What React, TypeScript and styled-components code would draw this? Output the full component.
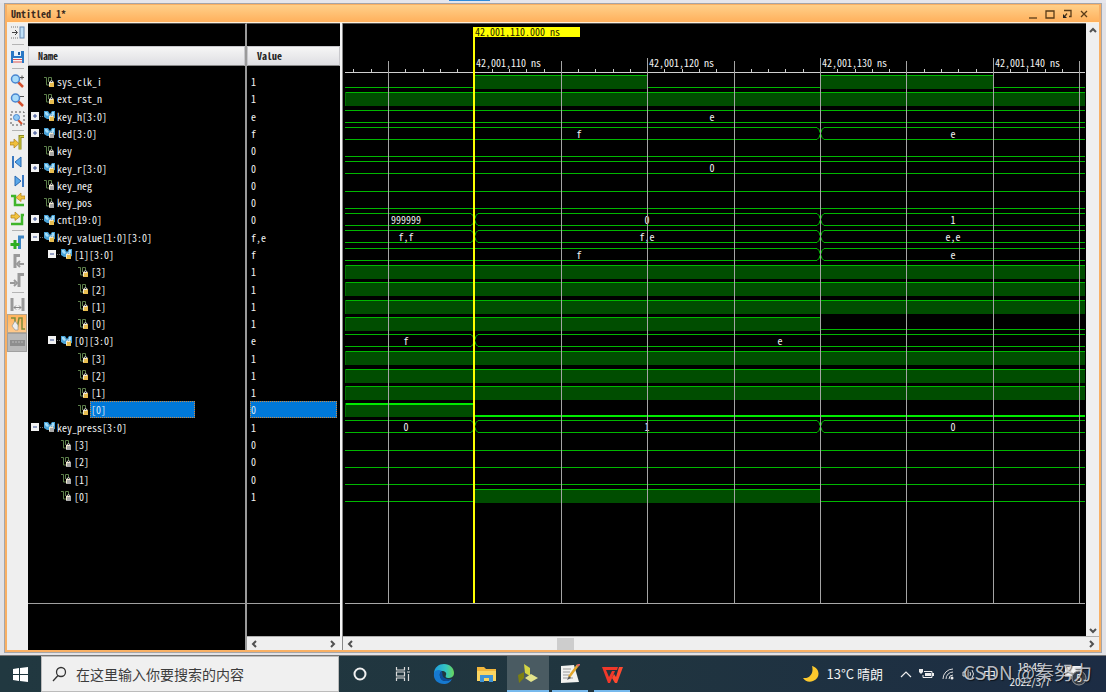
import React from "react";
import styled, { createGlobalStyle, css } from "styled-components";

const MONO = `"Noto Sans Mono CJK SC", "Liberation Mono", monospace`;
const UI = `"Noto Sans CJK SC", "Noto Sans", sans-serif`;

const Global = createGlobalStyle`
  * { box-sizing: border-box; }
  body { margin: 0; background: #e6e6ea; overflow: hidden; }
  button { padding: 0; border: 0; background: none; color: inherit; font: inherit; }
`;

const Screen = styled.div`
  display: flex;
  flex-direction: column;
  height: 100vh;
  font: 10px/14px ${MONO};
  color: #f2f2f2;
`;

const TopStrip = styled.div`
  height: 3px;
  padding-left: 449px;
  background: #e6e6ec;
`;
const TopAccent = styled.div`
  width: 41px;
  height: 1px;
  background: #2f8ad8;
`;

const Desk = styled.main`
  flex: 1;
  min-height: 0;
  display: flex;
  padding: 0 4px 2px 4px;
  background: #e2e2e6;
  border-bottom: 1px solid #777;
`;
const Window = styled.section`
  flex: 1;
  min-width: 0;
  display: flex;
  flex-direction: column;
  border: 1px solid #a5a5a8;
`;
const Frame = styled.div`
  flex: 1;
  min-height: 0;
  display: flex;
  flex-direction: column;
  border: 2px solid #f9b064;
  border-top-width: 1px;
`;
const TitleBar = styled.header`
  display: flex;
  align-items: center;
  height: 18px;
  padding: 0 7px 0 4px;
  background: linear-gradient(#ffd08a, #ffb05c);
  border-bottom: 1px solid #fff0d8;
  color: #3a2a20;
`;
const Title = styled.h1`
  flex: 1;
  margin: 0;
  font: bold 10px/14px ${MONO};
`;
const WinButton = styled.button`
  display: grid;
  place-items: center;
  width: 17px;
  height: 14px;
`;

const Body = styled.div`
  flex: 1;
  min-height: 0;
  display: flex;
  background: #000;
`;
const Toolbar = styled.nav`
  width: 21px;
  padding-right: 1px;
  background: #efefef;
`;
const ToolButton = styled.button<{ $state?: "on" | "off" }>`
  display: grid;
  place-items: center;
  width: 20px;
  height: 19px;
  ${(p) => p.$state === "on" && css`background: linear-gradient(#ffb35c, #ffc98c); border: 1px solid #b5a58e;`}
  ${(p) => p.$state === "off" && css`background: #b9b9b9; border: 1px solid #a0a0a0;`}
`;
const ToolRule = styled.hr`
  height: 1px;
  margin: 2px 3px 2px 5px;
  border: 0;
  background: #b4b4b4;
`;

const Column = styled.div<{ $w: number; $ruled?: boolean }>`
  flex: none;
  display: flex;
  flex-direction: column;
  width: ${(p) => p.$w}px;
  padding-top: 22px;
  border-top: 1px solid #555;
  border-right: ${(p) => (p.$ruled ? "2px solid #9a9a9a" : "0")};
`;
const Head = styled.div`
  height: 20px;
  padding: 2px 9px;
  background: linear-gradient(#f6f6f6, #dedee2);
  border: 1px solid #c8c8cc;
  border-bottom-color: #888;
  color: #222;
  font-weight: bold;
`;
const Rows = styled.ul<{ $top: number }>`
  display: flex;
  flex-direction: column;
  height: 432px;
  margin: ${(p) => p.$top}px 0 0;
  padding: 0;
  list-style: none;
`;
const NameRow = styled.li<{ $depth: number }>`
  flex: 1;
  display: flex;
  align-items: center;
  padding-left: ${(p) => 3 + p.$depth * 17}px;
`;
const Fold = styled.span`
  display: flex;
  width: 13px;
`;
const FoldButton = styled.button`
  display: flex;
`;
const Name = styled.span<{ $selected?: boolean }>`
  margin-left: 1px;
  height: 17px;
  padding: 1px 0;
  border: 1px solid transparent;
  ${(p) => p.$selected && css`width: 105px; background: #0078d8; border: 1px dotted #d08840; color: #d8e8f8;`}
`;
const ValueRow = styled.li`
  flex: 1;
  display: flex;
  align-items: center;
  padding: 0 3px;
`;
const Value = styled.span<{ $selected?: boolean }>`
  width: 100%;
  height: 17px;
  padding: 1px 0;
  border: 1px solid transparent;
  ${(p) => p.$selected && css`background: #0078d8; border: 1px dotted #d08840; color: #d8e8f8;`}
`;
const Foot = styled.div`
  display: flex;
  flex-direction: column;
  justify-content: flex-end;
  height: 47px;
  margin-top: auto;
  border-top: 1px solid #a0a0a0;
`;
const HBar = styled.div`
  display: flex;
  align-items: center;
  height: 14px;
  padding: 0 3px;
  background: #efefef;
  border-top: 1px solid #b0b0b0;
`;
const HTrack = styled.div`
  flex: 1;
  height: 12px;
  padding-left: 27%;
`;
const HThumb = styled.div`
  width: 17px;
  height: 12px;
  background: #cdcdcd;
`;
const ArrowButton = styled.button`
  display: flex;
`;
const Splitter = styled.div`
  width: 3px;
  background: #f4f4f4;
  border-right: 1px solid #888;
`;
const Wave = styled.div`
  flex: 1;
  min-width: 0;
  display: flex;
  flex-direction: column;
`;
const WaveTop = styled.div`
  flex: 1;
  min-height: 0;
  display: flex;
`;
const Plot = styled.svg`
  flex: 1;
  min-width: 0;
  height: 100%;
  border-top: 1px solid #555;
`;
const VBar = styled.div`
  display: flex;
  flex-direction: column;
  align-items: center;
  justify-content: space-between;
  width: 13px;
  padding: 3px 0 1px;
  background: #efefef;
`;

const Taskbar = styled.footer`
  position: relative;
  flex: none;
  display: flex;
  height: 36px;
  background: linear-gradient(90deg, #213840, #20353f 55%, #1c2c44);
  color: #f0f0f0;
  font: 13px/18px ${UI};
`;
const StartButton = styled.button`
  display: grid;
  place-items: center;
  width: 41px;
`;
const Search = styled.label`
  display: flex;
  align-items: center;
  gap: 9px;
  width: 298px;
  padding: 0 10px;
  background: #f0f0f0;
  border: 1px solid #bbb;
`;
const SearchInput = styled.input`
  flex: 1;
  min-width: 0;
  padding: 0;
  border: 0;
  outline: 0;
  background: none;
  font: 14px/20px ${UI};
  &::placeholder { color: #3c3c3c; opacity: 1; }
`;
const TaskButton = styled.button<{ $active?: boolean; $open?: boolean }>`
  display: grid;
  place-items: center;
  width: 42px;
  padding: 0 4px;
  ${(p) => p.$active && css`background: #4a5b62;`}
  ${(p) => (p.$active || p.$open) && css`box-shadow: inset 0 -2px #76b9ed;`}
`;
const OpenTask = styled(TaskButton)`
  width: 36px;
  margin: 0 3px;
`;
const Tray = styled.div`
  display: flex;
  align-items: center;
  margin-left: auto;
  padding-right: 18px;
`;
const Weather = styled.button`
  display: flex;
  align-items: center;
  gap: 8px;
  margin-right: 12px;
`;
const TrayIcon = styled.button`
  display: grid;
  place-items: center;
  width: 21px;
  height: 24px;
`;
const Clock = styled.time`
  width: 60px;
  font: 10px/15px ${UI};
  text-align: center;
`;
const Notice = styled.button`
  position: relative;
  width: 26px;
  height: 24px;
  margin-left: 2px;
`;
const Watermark = styled.span`
  position: absolute;
  right: 14px;
  top: 2px;
  color: rgba(214, 216, 222, 0.85);
  font: 400 19px/28px ${UI};
  text-shadow: 1px 1px 1px rgba(0, 0, 0, 0.6);
`;

/* ---- signals ---- */
type Seg = { to: number; v: string };
type Signal = {
  name: string;
  value: string;
  depth: number;
  bus?: "plus" | "minus";
  lock?: boolean;
  selected?: boolean;
  wave: Seg[];
};

const END = 99;
const hi: Seg[] = [{ to: END, v: "H" }];
const lo: Seg[] = [{ to: END, v: "L" }];
const at = (a: string, b: string, c: string): Seg[] => [{ to: 0, v: a }, { to: 20, v: b }, { to: END, v: c }];

const signals: Signal[] = [
  { name: "sys_clk_i", value: "1", depth: 0, lock: true, wave: [{ to: 0, v: "L" }, { to: 10, v: "H" }, { to: 20, v: "L" }, { to: 30, v: "H" }, { to: END, v: "L" }] },
  { name: "ext_rst_n", value: "1", depth: 0, lock: true, wave: hi },
  { name: "key_h[3:0]", value: "e", depth: 0, bus: "plus", lock: true, wave: [{ to: END, v: "e" }] },
  { name: "led[3:0]", value: "f", depth: 0, bus: "plus", wave: [{ to: 20, v: "f" }, { to: END, v: "e" }] },
  { name: "key", value: "0", depth: 0, wave: lo },
  { name: "key_r[3:0]", value: "0", depth: 0, bus: "plus", lock: true, wave: [{ to: END, v: "0" }] },
  { name: "key_neg", value: "0", depth: 0, wave: lo },
  { name: "key_pos", value: "0", depth: 0, wave: lo },
  { name: "cnt[19:0]", value: "0", depth: 0, bus: "plus", lock: true, wave: at("999999", "0", "1") },
  { name: "key_value[1:0][3:0]", value: "f,e", depth: 0, bus: "minus", lock: true, wave: at("f,f", "f,e", "e,e") },
  { name: "[1][3:0]", value: "f", depth: 1, bus: "minus", lock: true, wave: [{ to: 20, v: "f" }, { to: END, v: "e" }] },
  { name: "[3]", value: "1", depth: 2, lock: true, wave: hi },
  { name: "[2]", value: "1", depth: 2, lock: true, wave: hi },
  { name: "[1]", value: "1", depth: 2, lock: true, wave: hi },
  { name: "[0]", value: "1", depth: 2, lock: true, wave: [{ to: 20, v: "H" }, { to: END, v: "L" }] },
  { name: "[0][3:0]", value: "e", depth: 1, bus: "minus", lock: true, wave: [{ to: 0, v: "f" }, { to: END, v: "e" }] },
  { name: "[3]", value: "1", depth: 2, lock: true, wave: hi },
  { name: "[2]", value: "1", depth: 2, lock: true, wave: hi },
  { name: "[1]", value: "1", depth: 2, lock: true, wave: hi },
  { name: "[0]", value: "0", depth: 2, lock: true, selected: true, wave: [{ to: 0, v: "H" }, { to: END, v: "L" }] },
  { name: "key_press[3:0]", value: "1", depth: 0, bus: "minus", wave: at("0", "1", "0") },
  { name: "[3]", value: "0", depth: 1, wave: lo },
  { name: "[2]", value: "0", depth: 1, wave: lo },
  { name: "[1]", value: "0", depth: 1, wave: lo },
  { name: "[0]", value: "1", depth: 1, wave: at("L", "H", "L") },
];

/* ---- wave plot ---- */
const CURSOR_X = 131;
const NS = 17.28;
const LEFT = 2;
const RIGHT = 742;
const FLOOR = 579;
const xOf = (ns: number) => (ns === END ? RIGHT : Math.round(CURSOR_X + 0.4 + ns * NS));

function Track({ signal, top }: { signal: Signal; top: number }) {
  const low = top + 12;
  const line = signal.selected ? "#00ec00" : "#00b800";
  const w = signal.selected ? 2 : 1;
  let from = LEFT;
  const out: React.ReactNode[] = [];
  signal.wave.forEach((s, i) => {
    const to = xOf(s.to);
    const a = from;
    if (s.v === "H") {
      out.push(
        <g key={i}>
          <rect x={a} y={top} width={to - a} height={14} fill="#004d00" />
          <rect x={a} y={top} width={to - a} height={w} fill={line} />
          <rect x={a} y={top} width={1} height={14} fill="#007000" />
        </g>
      );
    } else if (s.v === "L") {
      out.push(<rect key={i} x={a} y={low} width={to - a} height={w} fill={line} />);
      if (i > 0) out.push(<rect key={`e${i}`} x={a} y={top} width={1} height={13} fill={line} />);
    } else {
      const l = i > 0 ? a + 4 : a;
      const r = s.to === END ? to : to - 3;
      const mid = Math.round(((i > 0 ? a : -5) + to) / 2);
      out.push(
        <g key={i}>
          <rect x={l} y={top} width={r - l} height={1} fill={line} />
          <rect x={l} y={low} width={r - l} height={1} fill={line} />
          {s.to !== END && (
            <path d={`M${r} ${top + 0.5}l2 2l3 8l2 2M${r} ${low + 0.5}l2 -2l3 -8l2 -2`} fill="none" stroke="#00d000" />
          )}
          <text x={mid} y={top + 11} textAnchor="middle" fill="#f2f2f2">{s.v}</text>
        </g>
      );
    }
    from = to;
  });
  return <>{out}</>;
}

function WavePlot() {
  const ticks = Array.from({ length: 43 }, (_, i) => i - 7);
  return (
    <Plot role="img" aria-label="Waveforms" fontFamily={MONO} fontSize="10">
      {signals.map((s, i) => (
        <Track key={i} signal={s} top={Math.round(51 + i * 17.27)} />
      ))}
      <rect x={LEFT} y={48} width={740} height={1} fill="#d0d0d0" />
      {ticks.map((t) => {
        const x = xOf(t);
        if (t % 5 !== 0) return <rect key={t} x={x} y={45} width={1} height={3} fill="#ccc" />;
        const y = t % 10 === 0 ? 34 : 37;
        return <rect key={t} x={x} y={y} width={1} height={FLOOR - y} fill="#a4a4a4" />;
      })}
      {[0, 10, 20, 30].map((t) => (
        <text key={t} x={xOf(t) + 2} y={43} fill="#f2f2f2">{`42,001,1${t / 10 + 1}0 ns`}</text>
      ))}
      <rect x={LEFT} y={FLOOR} width={740} height={1} fill="#a8a8a8" />
      <rect x={CURSOR_X - 1} y={3} width={2} height={FLOOR - 3} fill="#ffff00" />
      <rect x={CURSOR_X - 1} y={3} width={107} height={10} fill="#ffff00" />
      <text x={CURSOR_X + 1} y={12} fill="#222200">42,001,110.000 ns</text>
    </Plot>
  );
}

/* ---- small drawings ---- */
const Arrow = ({ d }: { d: string }) => (
  <svg width="8" height="8" viewBox="0 0 8 8"><path d={d} fill="none" stroke="#505050" strokeWidth="2" /></svg>
);
const UP = "M1 6L4 3L7 6", DOWN = "M1 2L4 5L7 2", LEFTWARD = "M6 1L3 4L6 7", RIGHTWARD = "M2 1L5 4L2 7";

const SignalIcon = ({ bus, lock }: { bus: boolean; lock: boolean }) => (
  <svg width="11" height="12" viewBox="0 0 11 12">
    {bus ? (
      <>
        <path d="M0 1H4L6 4L8 1H11V8L8 9H3L0 7Z" fill="#4aa3d8" />
        <path d="M1 2H3L5 5L3 6L1 4ZM8 2H10V5H8Z" fill="#a5dcf7" />
      </>
    ) : (
      <path d="M0 1.500H2.500V9H5M4.500 6V1.500H7.500V5" fill="none" stroke="#5c7f4a" />
    )}
    <path d="M6 7V5.500Q7.500 4 9 5.500V7" fill="none" stroke="#e0e0e0" />
    <rect x="5" y="6" width="5" height="5" fill={lock ? "#e8bd50" : "#a9a9a9"} />
    <path d="M5 6.500h4M5.500 7v3" stroke="#f3ead0" />
  </svg>
);

const FoldBox = ({ plus }: { plus: boolean }) => (
  <svg width="13" height="9" viewBox="0 0 13 9">
    <rect width="8" height="8" fill="#f2f2f2" />
    <path d={plus ? "M2 4h4M4 2v4" : "M2 4h4"} stroke="#304890" />
    <path d="M9 4.500h4" stroke="#666" strokeDasharray="1 1" />
  </svg>
);

const Lens = ({ sign }: { sign: React.ReactNode }) => (
  <>
    <path d="M8 9L13 14" stroke="#d4512f" strokeWidth="2.500" />
    <circle cx="5.500" cy="6" r="4" fill="#a9dcfa" stroke="#4a86d0" strokeWidth="1.500" />
    {sign}
  </>
);
const toolArt: Record<string, React.ReactNode> = {
  dock: <><path d="M1 2h8M1 13h8" stroke="#777" strokeDasharray="1 1" /><path d="M2 7.500h5M5 5l2.500 2.500L5 10" fill="none" stroke="#444" /><rect x="10" y="2" width="4" height="11" fill="#bfe0f8" stroke="#6688b0" /></>,
  save: <><path d="M1 2h13v12H1z" fill="#2b78c5" /><path d="M4 2h7v5H4z" fill="#e8f2fb" /><path d="M8 3h2v3H8z" fill="#1f5c9c" /><path d="M3 9h9v5H3z" fill="#f5f5f5" /><path d="M3 10.500h9M3 13h9" stroke="#d85050" /></>,
  zin: <Lens sign={<path d="M10 4.500h4M12 2.500v4" stroke="#555" />} />,
  zout: <Lens sign={<path d="M10 4.500h4" stroke="#555" />} />,
  fit: <><rect x="1" y="1" width="13" height="13" fill="none" stroke="#555" strokeDasharray="2 2" /><path d="M8 9l4 4" stroke="#d4512f" strokeWidth="2" /><circle cx="6.500" cy="6.500" r="3" fill="#8fcaf5" stroke="#4a86d0" /></>,
  goto: <><path d="M14 1.500h-4v13" fill="none" stroke="#8e8a20" strokeWidth="3" /><path d="M14 1.500h-4v13" fill="none" stroke="#d8d040" /><path d="M0 7h4V4l5 4.500L4 13v-3H0z" fill="#efbf3c" stroke="#b08018" strokeWidth=".7" /></>,
  first: <><path d="M3 2v12" stroke="#3a78c0" strokeWidth="2" /><path d="M11 3v10L5 8z" fill="#5aa8ea" stroke="#2868b0" /></>,
  last: <><path d="M13 2v12" stroke="#3a78c0" strokeWidth="2" /><path d="M5 3v10l6-5z" fill="#5aa8ea" stroke="#2868b0" /></>,
  prev: <><path d="M1 4h4v9h9" fill="none" stroke="#3fb52a" strokeWidth="2.500" /><path d="M15 4h-4V1L6 5.500l5 4V7h4z" fill="#f2c23e" stroke="#b08018" strokeWidth=".7" /></>,
  next: <><path d="M1 13h11V4h2" fill="none" stroke="#3fb52a" strokeWidth="2.500" /><path d="M1 4h4V1l5 4.500l-5 4V7H1z" fill="#f2c23e" stroke="#b08018" strokeWidth=".7" /></>,
  add: <><path d="M14 2H9.500v12" fill="none" stroke="#3f86c4" strokeWidth="3" /><path d="M5 5v9M.5 9.500h9" stroke="#2fae22" strokeWidth="3" /></>,
  prevm: <><path d="M10 1.500H5V14" fill="none" stroke="#999" strokeWidth="3" /><path d="M14 10H9M10 7l-3 3l3 3" fill="none" stroke="#999" strokeWidth="2" /></>,
  nextm: <><path d="M14 1.500H9V14" fill="none" stroke="#999" strokeWidth="3" /><path d="M0 10h5M4 7l3 3l-3 3" fill="none" stroke="#999" strokeWidth="2" /></>,
  swap: <><path d="M2 1v13M13 1v13" stroke="#999" strokeWidth="3" /><path d="M4 10.500h7M6 8.500l-2 2l2 2M9 8.500l2 2l-2 2" fill="none" stroke="#888" /></>,
  snap: <><path d="M1 2h4v11M7 13L9 2h3v11h3" fill="none" stroke="#7d8c38" strokeWidth="1.500" /><path d="M5 5L2 10l3 4h3V9z" fill="#eee" stroke="#888" strokeWidth=".6" /></>,
  ruler: <><rect x="0" y="5" width="15" height="6" fill="#8e8e8e" /><path d="M2 7h11" stroke="#bbb" strokeDasharray="2 1" /></>,
};
const tools: { id: string; label: string; rule?: boolean; state?: "on" | "off" }[] = [
  { id: "dock", label: "Dock panel", rule: true },
  { id: "save", label: "Save", rule: true },
  { id: "zin", label: "Zoom in" },
  { id: "zout", label: "Zoom out" },
  { id: "fit", label: "Zoom fit", rule: true },
  { id: "goto", label: "Go to cursor" },
  { id: "first", label: "Go to start" },
  { id: "last", label: "Go to end" },
  { id: "prev", label: "Previous transition" },
  { id: "next", label: "Next transition", rule: true },
  { id: "add", label: "Add marker" },
  { id: "prevm", label: "Previous marker" },
  { id: "nextm", label: "Next marker", rule: true },
  { id: "swap", label: "Swap cursors" },
  { id: "snap", label: "Snap to transition", state: "on" },
  { id: "ruler", label: "Floating ruler", state: "off" },
];

const winArt = [
  { label: "Minimize", art: <path d="M1 9h8" /> },
  { label: "Maximize", art: <path d="M1 2h8v7H1z" /> },
  { label: "Float", art: <><path d="M2 1.500h7v6H7M5 4.500L3 7" /><path d="M1 5v4h4z" fill="#222" stroke="none" /></> },
  { label: "Close", art: <path d="M2 2l6 6M8 2l-6 6" /> },
];

export default function App() {
  return (
    <Screen>
      <Global />
      <TopStrip><TopAccent /></TopStrip>
      <Desk>
        <Window>
          <Frame>
            <TitleBar>
              <Title>Untitled 1*</Title>
              {winArt.map((w) => (
                <WinButton key={w.label} aria-label={w.label}>
                  <svg width="10" height="10" viewBox="0 0 10 10" fill="none" stroke="#5a3c18" strokeWidth="1.300">{w.art}</svg>
                </WinButton>
              ))}
            </TitleBar>
            <Body>
              <Toolbar aria-label="Waveform tools">
                {tools.map((t) => (
                  <React.Fragment key={t.id}>
                    <ToolButton aria-label={t.label} $state={t.state}>
                      <svg width="15" height="15" viewBox="0 0 15 15">{toolArt[t.id]}</svg>
                    </ToolButton>
                    {t.rule && <ToolRule />}
                  </React.Fragment>
                ))}
              </Toolbar>
              <Column $w={219} $ruled>
                <Head>Name</Head>
                <Rows $top={7}>
                  {signals.map((s, i) => (
                    <NameRow key={i} $depth={s.depth}>
                      <Fold>
                        {s.bus && (
                          <FoldButton aria-label={s.bus === "plus" ? "Expand" : "Collapse"}>
                            <FoldBox plus={s.bus === "plus"} />
                          </FoldButton>
                        )}
                      </Fold>
                      <SignalIcon bus={!!s.bus} lock={!!s.lock} />
                      <Name $selected={s.selected}>{s.name}</Name>
                    </NameRow>
                  ))}
                </Rows>
                <Foot />
              </Column>
              <Column $w={93}>
                <Head>Value</Head>
                <Rows $top={7}>
                  {signals.map((s, i) => (
                    <ValueRow key={i}><Value $selected={s.selected}>{s.value}</Value></ValueRow>
                  ))}
                </Rows>
                <Foot>
                  <HBar>
                    <ArrowButton aria-label="Scroll left"><Arrow d={LEFTWARD} /></ArrowButton>
                    <HTrack />
                    <ArrowButton aria-label="Scroll right"><Arrow d={RIGHTWARD} /></ArrowButton>
                  </HBar>
                </Foot>
              </Column>
              <Splitter />
              <Wave>
                <WaveTop>
                  <WavePlot />
                  <VBar>
                    <ArrowButton aria-label="Scroll up"><Arrow d={UP} /></ArrowButton>
                    <ArrowButton aria-label="Scroll down"><Arrow d={DOWN} /></ArrowButton>
                  </VBar>
                </WaveTop>
                <HBar>
                  <ArrowButton aria-label="Scroll left"><Arrow d={LEFTWARD} /></ArrowButton>
                  <HTrack><HThumb /></HTrack>
                  <ArrowButton aria-label="Scroll right"><Arrow d={RIGHTWARD} /></ArrowButton>
                </HBar>
              </Wave>
            </Body>
          </Frame>
        </Window>
      </Desk>
      <Taskbar>
        <StartButton aria-label="Start">
          <svg width="15" height="15" viewBox="0 0 15 15"><path d="M0 2L6 1V7H0ZM7 1L15 0V7H7ZM0 8H6V14L0 13ZM7 8H15V15L7 14Z" fill="#fff" /></svg>
        </StartButton>
        <Search>
          <svg width="15" height="16" viewBox="0 0 15 16"><circle cx="9" cy="6" r="4.500" fill="none" stroke="#333" strokeWidth="1.300" /><path d="M6 9.500L1 15" stroke="#333" strokeWidth="1.300" /></svg>
          <SearchInput aria-label="搜索" placeholder="在这里输入你要搜索的内容" />
        </Search>
        <TaskButton aria-label="Cortana">
          <svg width="14" height="14" viewBox="0 0 14 14"><circle cx="7" cy="7" r="5.500" fill="none" stroke="#f0f0f0" strokeWidth="2" /></svg>
        </TaskButton>
        <TaskButton aria-label="Task view">
          <svg width="15" height="14" viewBox="0 0 15 14"><path d="M1.500 0v3h8V0M1.500 14v-3h8v3M1.500 5h8v4h-8zM13.500 0v3M13.500 7v7M12 5h3" fill="none" stroke="#dcdcdc" strokeWidth="1.200" /></svg>
        </TaskButton>
        <TaskButton aria-label="Edge">
          <svg width="22" height="22" viewBox="0 0 22 22">
            <defs>
              <linearGradient id="eg" x1="0" x2="1"><stop offset="0" stopColor="#1d9be0" /><stop offset=".6" stopColor="#35c6c0" /><stop offset="1" stopColor="#6ad75a" /></linearGradient>
            </defs>
            <path d="M1 11C1 4 6 1 11 1C17 1 21 5 21 10C21 14 18 15 15 15C13 15 12 14 13 12C14 10 12 8 9 8C5 8 2 9 1 11Z" fill="url(#eg)" />
            <path d="M1 10C2 7 6 6 9 8C6 9 6 14 9 17C12 19 16 18 19 16C17 20 14 21 11 21C5 21 0 17 1 10Z" fill="#1679d0" />
            <path d="M9 8C6 9 6 14 9 17C12 19 16 18 19 16C14 17 10 15 9.500 12Z" fill="#0d4d9b" />
          </svg>
        </TaskButton>
        <TaskButton aria-label="File Explorer">
          <svg width="19" height="16" viewBox="0 0 19 16"><path d="M0 1H7L9 3H19V15H0Z" fill="#f3b73c" /><path d="M0 5H19V15H0Z" fill="#fbd562" /><path d="M3 9H16V16H12V12H7V16H3Z" fill="#3f93d6" /></svg>
        </TaskButton>
        <TaskButton $active aria-label="Vivado">
          <svg width="20" height="20" viewBox="0 0 20 20"><path d="M6 0L12 4V12L7 9Z" fill="#d4d544" /><path d="M0 11L6 8V14L1 19Z" fill="#7d8010" /><path d="M7 14L13 10L20 14L13 18Z" fill="#e3e48c" /></svg>
        </TaskButton>
        <OpenTask $open aria-label="Notepad">
          <svg width="20" height="20" viewBox="0 0 20 20"><path d="M1 2L14 1L19 18L1 19Z" fill="#f2f2f0" /><path d="M3 5h8M3 8h7M3 11h6M3 14h10" stroke="#999" /><path d="M18 1L9 13" stroke="#e2a72c" strokeWidth="2.500" /><path d="M20 0L17 2" stroke="#d66" strokeWidth="2" /><path d="M9 12l-2 4l4-2z" fill="#555" /></svg>
        </OpenTask>
        <OpenTask $open aria-label="WPS Office">
          <svg width="21" height="17" viewBox="0 0 21 17"><path d="M0 1H16L15 4H4L7 11L10 5H13L8 17H6Z" fill="#f0382a" /><path d="M12 8L14 11L17 1H21L15 17H13L10 12Z" fill="#ff4a30" /></svg>
        </OpenTask>
        <Tray>
          <Weather>
            <svg width="16" height="16" viewBox="0 0 16 16"><path d="M9 0C17 2 18 12 10 15C6 17 2 15 0 12C7 13 11 7 9 0Z" fill="#fcc92d" /></svg>
            13°C 晴朗
          </Weather>
          <TrayIcon aria-label="Show hidden icons">
            <svg width="12" height="7" viewBox="0 0 12 7"><path d="M1 6L6 1L11 6" fill="none" stroke="#eee" strokeWidth="1.200" /></svg>
          </TrayIcon>
          <TrayIcon aria-label="Battery">
            <svg width="15" height="12" viewBox="0 0 15 12"><path d="M5 3.500h8v6H4V7" fill="none" stroke="#eee" /><path d="M6 5h6v3H6zM13 5h2v3h-2zM0 1h4v3L2 6L0 4z" fill="#eee" /></svg>
          </TrayIcon>
          <TrayIcon aria-label="Network">
            <svg width="12" height="12" viewBox="0 0 12 12"><path d="M1 11A10 10 0 0 1 11 1M4 11A7 7 0 0 1 11 4M7 11A4 4 0 0 1 11 7" fill="none" stroke="#ddd" /><circle cx="10" cy="10" r="1.500" fill="#eee" /></svg>
          </TrayIcon>
          <TrayIcon aria-label="Volume">
            <svg width="13" height="12" viewBox="0 0 13 12"><path d="M1 4h2l3-3v10L3 8H1zM8 4q1 2 0 4M10 2q3 4 0 8" fill="none" stroke="#ddd" /></svg>
          </TrayIcon>
          <TrayIcon>中</TrayIcon>
          <Clock>18:45<br />2022/3/7</Clock>
          <Notice aria-label="Notifications">
            <svg width="26" height="24" viewBox="0 0 26 24"><path d="M3 4H19V15H12L8 18V15H3Z" fill="#f4f4f4" /><circle cx="17" cy="16" r="7" fill="#3a4048" stroke="#999" /><text x="17" y="20" fontSize="10" textAnchor="middle" fill="#fff">5</text></svg>
          </Notice>
        </Tray>
        <Watermark>CSDN @秦努力</Watermark>
      </Taskbar>
    </Screen>
  );
}
